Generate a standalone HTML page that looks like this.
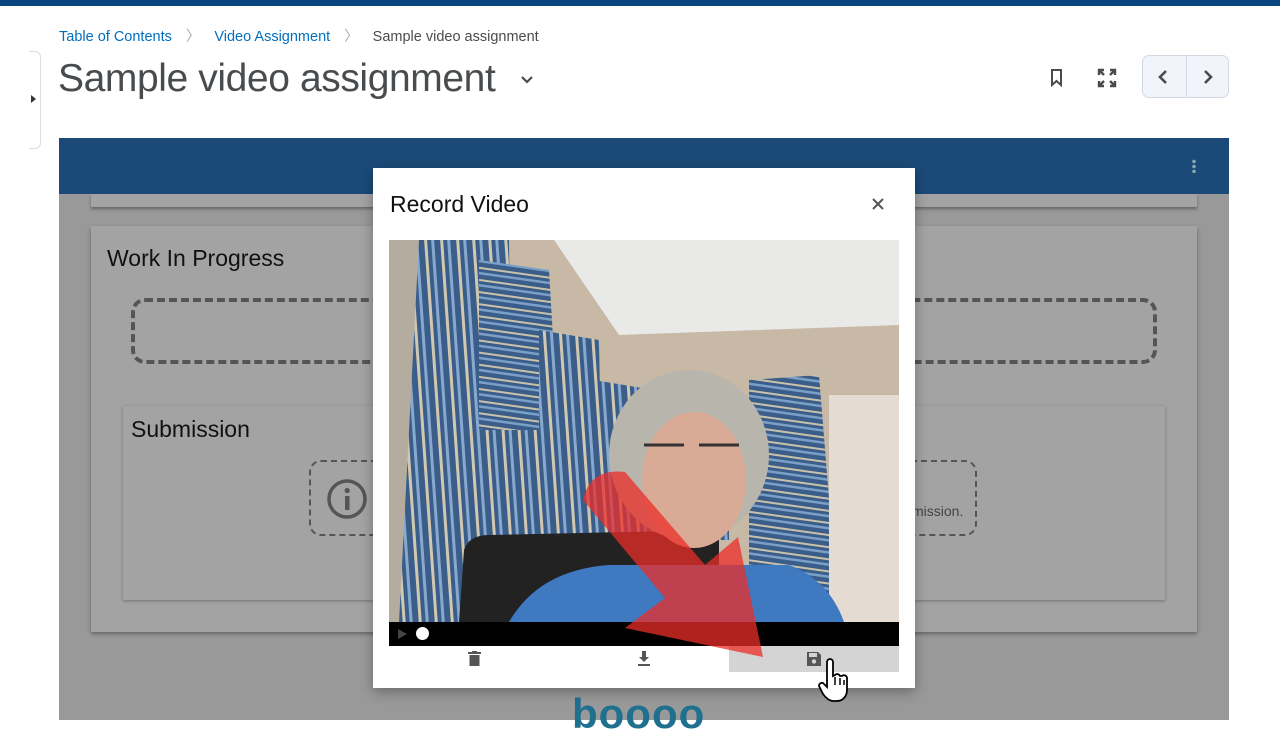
<!DOCTYPE html>
<html><head><meta charset="utf-8"><style>
*{margin:0;padding:0;box-sizing:border-box}
body{width:1280px;height:720px;overflow:hidden;background:#fff;font-family:"Liberation Sans",sans-serif;position:relative}
.abs{position:absolute}
</style></head><body>
<div class="abs" style="left:0;top:0;width:1280px;height:6px;background:#0a4580"></div>
<div class="abs" style="left:59px;top:25px;font-size:14.5px;color:#494c4e;white-space:nowrap">
<span style="color:#006fbf">Table of Contents</span><span style="color:#aaa;margin:0 14px">〉</span><span style="color:#006fbf">Video Assignment</span><span style="color:#aaa;margin:0 14px">〉</span>Sample video assignment</div>
<div class="abs" style="left:29px;top:51px;width:12px;height:98px;border:1px solid #ddd;border-left:none;border-radius:0 6px 6px 0"></div>
<div class="abs" style="left:31px;top:95px;width:0;height:0;border-left:5px solid #333;border-top:4px solid transparent;border-bottom:4px solid transparent"></div>
<div class="abs" style="left:58px;top:57px;font-size:39px;color:#494c4e;letter-spacing:-0.4px">Sample video assignment</div>
<svg class="abs" style="left:519px;top:74px" width="16" height="12"><path d="M3 3l5 5 5-5" stroke="#494c4e" stroke-width="2.2" fill="none"/></svg>
<svg class="abs" style="left:1050px;top:68px" width="14" height="20"><path d="M2 2h9v15l-4.5-4-4.5 4z" stroke="#494c4e" stroke-width="2" fill="none"/></svg>
<svg class="abs" style="left:1097px;top:68px" width="20" height="20"><g stroke="#494c4e" stroke-width="2.4" fill="none"><path d="M2 7V2h5M18 7V2h-5M2 13v5h5M18 13v5h-5M3 3l4 4M17 3l-4 4M3 17l4-4M17 17l-4-4"/></g></svg>
<div class="abs" style="left:1142px;top:55px;width:87px;height:43px;border:1px solid #d3d9e3;border-radius:7px;background:#f1f5fb"></div>
<div class="abs" style="left:1186px;top:56px;width:1px;height:41px;background:#d3d9e3"></div>
<svg class="abs" style="left:1155px;top:68px" width="16" height="18"><path d="M11 3l-6 6 6 6" stroke="#494c4e" stroke-width="2.6" fill="none"/></svg>
<svg class="abs" style="left:1200px;top:68px" width="16" height="18"><path d="M5 3l6 6-6 6" stroke="#494c4e" stroke-width="2.6" fill="none"/></svg>

<div class="abs" style="left:59px;top:138px;width:1170px;height:582px;background:#999"></div>
<div class="abs" style="left:59px;top:138px;width:1170px;height:56px;background:#1b4a78"></div>
<div class="abs" style="left:1192px;top:159px;width:4px;height:14px;background:radial-gradient(circle,#8aa 1.6px,transparent 2px) 0 0/4px 5px"></div>
<div class="abs" style="left:91px;top:194px;width:1106px;height:13px;background:#a3a3a3;box-shadow:0 2px 3px rgba(0,0,0,.35)"></div>
<div class="abs" style="left:91px;top:226px;width:1106px;height:406px;background:#a3a3a3;box-shadow:0 2px 4px rgba(0,0,0,.35)"></div>
<div class="abs" style="left:107px;top:245px;font-size:23px;color:#111">Work In Progress</div>
<div class="abs" style="left:131px;top:298px;width:1026px;height:66px;border:4px dashed #555;border-radius:14px"></div>
<div class="abs" style="left:123px;top:406px;width:1042px;height:194px;background:#a3a3a3;box-shadow:0 1px 3px rgba(0,0,0,.3)"></div>
<div class="abs" style="left:131px;top:416px;font-size:23px;color:#111">Submission</div>
<div class="abs" style="left:309px;top:460px;width:668px;height:76px;border:2px dashed #555;border-radius:12px"></div>
<svg class="abs" style="left:326px;top:478px" width="42" height="42"><circle cx="21" cy="21" r="18" stroke="#555" stroke-width="3.5" fill="none"/><rect x="19" y="18" width="4.5" height="14" fill="#555"/><circle cx="21.2" cy="12.5" r="2.6" fill="#555"/></svg>
<div class="abs" style="left:912px;top:503px;font-size:14px;color:#444">mission.</div>
<div class="abs" style="left:572px;top:690px;font-size:42px;font-weight:bold;color:#1f6f8f;letter-spacing:1px">boooo</div>

<div class="abs" style="left:373px;top:168px;width:542px;height:520px;background:#fff;box-shadow:0 4px 12px rgba(0,0,0,.3)"></div>
<div class="abs" style="left:390px;top:191px;font-size:23px;color:#111">Record Video</div>
<svg class="abs" style="left:871px;top:197px" width="14" height="14"><path d="M2 2l10 10M12 2L2 12" stroke="#555" stroke-width="2"/></svg>
<svg class="abs" style="left:389px;top:240px" width="510" height="382" viewBox="0 0 510 382">
<defs>
<pattern id="st" width="60" height="12" patternUnits="userSpaceOnUse" patternTransform="rotate(8)"><rect width="60" height="12" fill="#3a5d8a"/><rect y="2" width="60" height="2" fill="#c9c2aa"/><rect y="7" width="60" height="2.5" fill="#7aa0c8"/></pattern>
<pattern id="sv" width="16" height="60" patternUnits="userSpaceOnUse" patternTransform="rotate(-4)"><rect width="16" height="60" fill="#3a5d8a"/><rect x="3" width="3" height="60" fill="#d0c8b0"/><rect x="10" width="3" height="60" fill="#87a9cf"/></pattern>
</defs>
<rect width="510" height="382" fill="#c8b8a6"/>
<polygon points="165,0 510,0 510,85 230,95" fill="#e9e9e8"/>
<rect x="0" y="0" width="30" height="382" fill="#b5aca0"/>
<path d="M30 0 L120 0 L125 382 L10 382Z" fill="url(#sv)"/>
<path d="M90 20 L160 30 L170 200 L90 190Z" fill="url(#st)"/>
<path d="M150 90 L210 100 L215 382 L150 382Z" fill="url(#sv)"/>
<rect x="80" y="190" width="90" height="192" fill="url(#sv)"/>
<path d="M205 140 L265 150 L260 382 L200 382Z" fill="url(#sv)"/>
<path d="M280 155 L340 150 L340 300 L280 300Z" fill="url(#sv)"/>
<path d="M360 140 L430 135 L450 382 L360 382Z" fill="url(#st)"/>
<rect x="440" y="155" width="70" height="227" fill="#e4dcd2"/>
<path d="M70 382 L75 310 Q80 295 100 295 L330 290 L330 382Z" fill="#222"/>
<ellipse cx="300" cy="215" rx="80" ry="85" fill="#b8b5ad"/>
<ellipse cx="305" cy="240" rx="52" ry="68" fill="#d9aa95"/>
<path d="M255 205 h40 M310 205 h40" stroke="#333" stroke-width="3"/>
<path d="M120 382 Q150 330 220 325 L400 325 Q440 340 455 382Z" fill="#3f79c0"/>
</svg>
<div class="abs" style="left:389px;top:622px;width:510px;height:24px;background:#000"></div>
<div class="abs" style="left:398px;top:629px;width:0;height:0;border-left:9px solid #444;border-top:5px solid transparent;border-bottom:5px solid transparent"></div>
<div class="abs" style="left:416px;top:627px;width:13px;height:13px;border-radius:50%;background:#fff"></div>
<div class="abs" style="left:729px;top:646px;width:170px;height:26px;background:#d4d4d4"></div>
<svg class="abs" style="left:0;top:0" width="1280" height="720"><path d="M583 500 Q590 468 625 472 L705 565 L738 537 L763 657 L625 628 L665 598 Z" fill="rgba(235,45,40,.75)"/></svg>
<svg class="abs" style="left:468px;top:651px" width="13" height="16"><rect x="0" y="1" width="13" height="2" fill="#555"/><rect x="4" y="0" width="5" height="2" fill="#555"/><rect x="1.5" y="4" width="10" height="11" fill="#555"/></svg>
<svg class="abs" style="left:637px;top:651px" width="14" height="16"><path d="M5 0h4v6h3l-5 5-5-5h3z" fill="#555"/><rect x="1" y="13" width="12" height="2" fill="#555"/></svg>
<svg class="abs" style="left:806px;top:651px" width="16" height="16"><path d="M1 1h11l3 3v11H1z" fill="#555"/><rect x="3" y="2" width="8" height="4" fill="#d4d4d4"/><circle cx="8" cy="10.5" r="2.2" fill="#d4d4d4"/></svg>
<svg class="abs" style="left:818px;top:658px" width="32" height="46" viewBox="0 0 32 46"><path d="M9 4a3 3 0 016 0v14l2-1a3 3 0 015 1l2 0a3 3 0 015 2v12c0 6-4 11-10 11h-4c-4 0-7-3-10-7l-4-8a3 3 0 014-3l4 4z" fill="#fff" stroke="#000" stroke-width="1.8"/><path d="M17 19v8M22 20v7M26 22v5" stroke="#000" stroke-width="1.5"/></svg>
</body></html>
